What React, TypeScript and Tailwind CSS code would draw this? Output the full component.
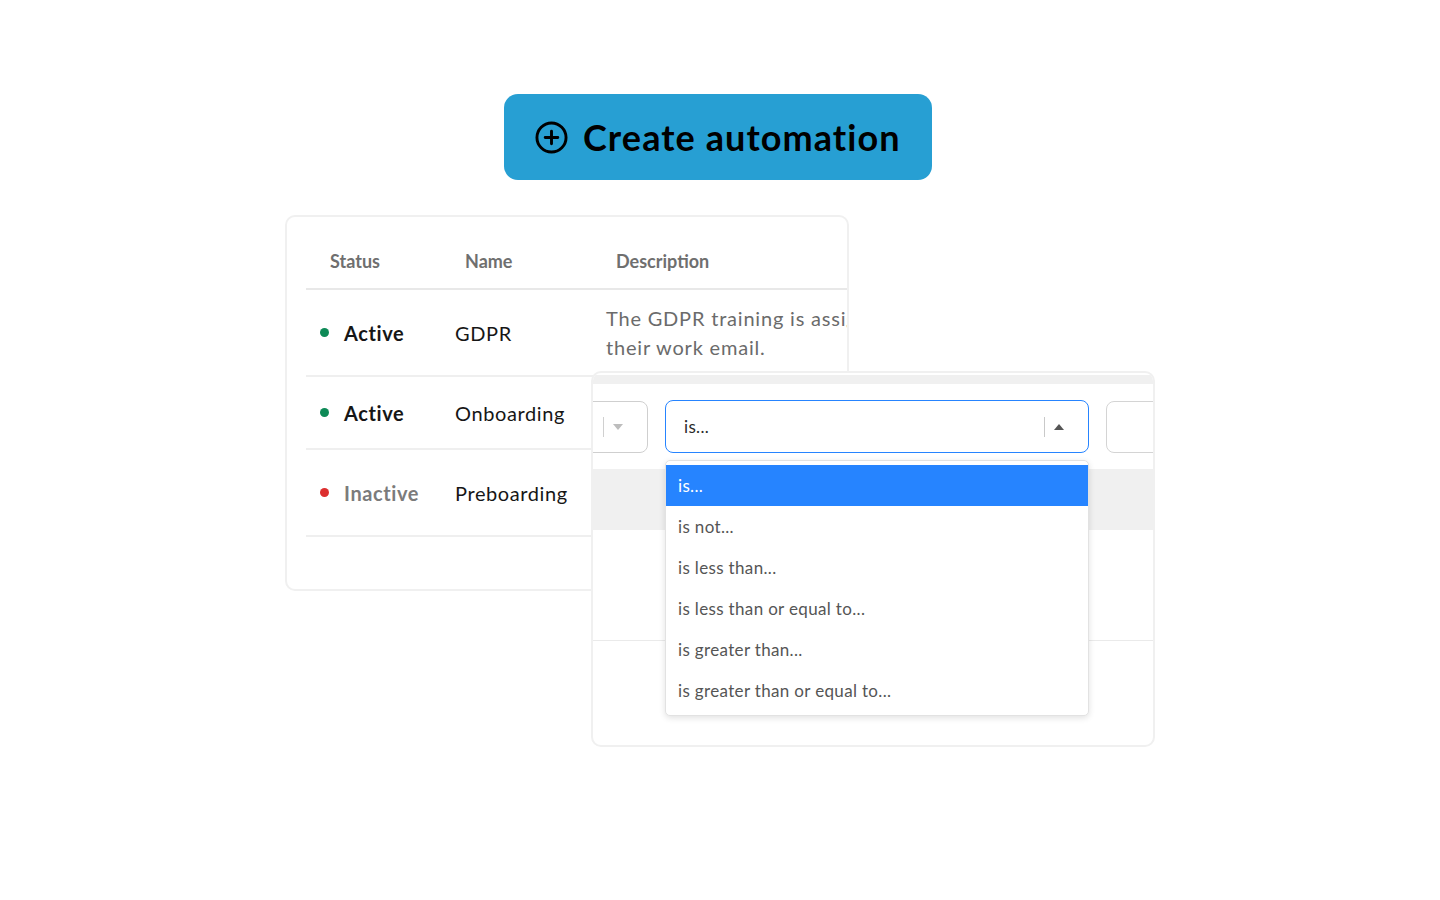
import React from "react";

const rows = [
  { status: "Active", active: true, name: "GDPR", desc: ["The GDPR training is assigned to new hires at", "their work email."], h: "h-[87px]" },
  { status: "Active", active: true, name: "Onboarding", desc: [], h: "h-[73px]" },
  { status: "Inactive", active: false, name: "Preboarding", desc: [], h: "h-[87px]" },
];

const options = [
  "is...",
  "is not...",
  "is less than...",
  "is less than or equal to...",
  "is greater than...",
  "is greater than or equal to...",
];

const Caret = ({ up, color }: { up?: boolean; color: string }) => (
  <svg width="10" height="6" viewBox="0 0 10 6" className={color}>
    {up ? <path d="M0 6 L5 0 L10 6 Z" fill="currentColor" /> : <path d="M0 0 L10 0 L5 6 Z" fill="currentColor" />}
  </svg>
);

const App = () => {
  return (
    <div className="w-full min-h-screen bg-white flex flex-col items-center pt-[94px] font-['Lato',sans-serif]">
      {/* Create button */}
      <button className="w-[428px] h-[86px] mr-[4px] rounded-[14px] bg-[#279fd3] flex items-center pl-[31px] gap-[15px] text-black">
        <svg width="33" height="33" viewBox="0 0 34 34" fill="none" stroke="currentColor" strokeWidth="3" strokeLinecap="round" className="shrink-0">
          <circle cx="17" cy="17" r="15" />
          <path d="M17 10.5 V23.5 M10.5 17 H23.5" />
        </svg>
        <span className="text-[36px] font-bold tracking-[0.03em] leading-none whitespace-nowrap">Create automation</span>
      </button>

      {/* Table + overlay panel */}
      <div className="relative w-[870px] h-[531px] mt-[35px]">
        <div className="w-[564px] h-[376px] border-2 border-[#f0f0f0] rounded-[10px] overflow-hidden pl-[19px] bg-white">
          <div className="w-[700px]">
            <div className="flex items-end h-[73px] pb-[13px] border-b-2 border-[#e8e8e8] text-[18px] font-bold text-[#6f6f6f]">
              <div className="w-[139px] shrink-0 pl-[24px]">Status</div>
              <div className="w-[151px] shrink-0 pl-[20px]">Name</div>
              <div className="pl-[20px] shrink-0">Description</div>
            </div>
            {rows.map((r, i) => (
              <div key={i} className={`flex items-center border-b-2 border-[#efefef] ${r.h}`}>
                <div className="w-[139px] shrink-0 pl-[14px] flex items-center gap-[15px]">
                  <span className={`w-[9px] h-[9px] rounded-full shrink-0 ${r.active ? "bg-[#0e8a57]" : "bg-[#dc2f2f]"}`} />
                  <span className={`text-[20px] font-bold tracking-[0.03em] ${r.active ? "text-[#161616]" : "text-[#7b7b7b]"}`}>{r.status}</span>
                </div>
                <div className="w-[151px] shrink-0 pl-[10px] text-[20px] text-[#161616] tracking-[0.03em]">{r.name}</div>
                <div className="pl-[10px] shrink-0 text-[20px] leading-[29px] text-[#6b6b6b] tracking-[0.04em] whitespace-nowrap">
                  {r.desc.map((d, j) => (
                    <div key={j}>{d}</div>
                  ))}
                </div>
              </div>
            ))}
          </div>
        </div>

        {/* Filter panel overlay */}
        <div className="absolute left-[306px] top-[156px] w-[564px] h-[376px] border-2 border-[#f0f0f0] rounded-[10px] bg-white overflow-hidden">
          <div className="h-[2px]" />
          <div className="h-[9px] bg-[#f0f0f0]" />
          <div className="relative">
            <div className="flex items-center gap-[17px] pt-[16px] -ml-[61px]">
              <div className="w-[116px] h-[52px] shrink-0 rounded-[8px] border border-[#cfcfcf] flex items-center justify-end pr-[24px] gap-[9px] bg-white">
                <span className="w-px h-[20px] bg-[#d0d0d0]" />
                <Caret color="text-[#bdbdbd]" />
              </div>
              <div className="w-[424px] h-[53px] shrink-0 rounded-[8px] border-[1.5px] border-[#2684ff] flex items-center pl-[18px] pr-[24px] bg-white">
                <span className="flex-1 text-[17px] text-[#2a2a2a] tracking-[0.02em]">is...</span>
                <span className="w-px h-[20px] bg-[#c9c9c9] mr-[9px]" />
                <Caret up color="text-[#555555]" />
              </div>
              <div className="w-[120px] h-[52px] shrink-0 rounded-[8px] border border-[#d4d4d4] bg-white" />
            </div>

            <div className="mt-[16px] h-[61px] bg-[#f0f0f0]" />
            <div className="h-[111px] border-b border-[#eaeaea]" />

            {/* Dropdown menu */}
            <div className="absolute left-[72px] top-[76px] w-[424px] rounded-[5px] bg-white border border-[#e2e2e2] shadow-[0_2px_6px_rgba(0,0,0,0.12)] py-[4px]">
              {options.map((o, i) => (
                <div
                  key={o}
                  className={`h-[41px] flex items-center pl-[12px] text-[17px] tracking-[0.02em] ${
                    i === 0 ? "bg-[#2684ff] text-white" : "text-[#555555]"
                  }`}
                >
                  {o}
                </div>
              ))}
            </div>
          </div>
        </div>
      </div>
    </div>
  );
};

export default App;
